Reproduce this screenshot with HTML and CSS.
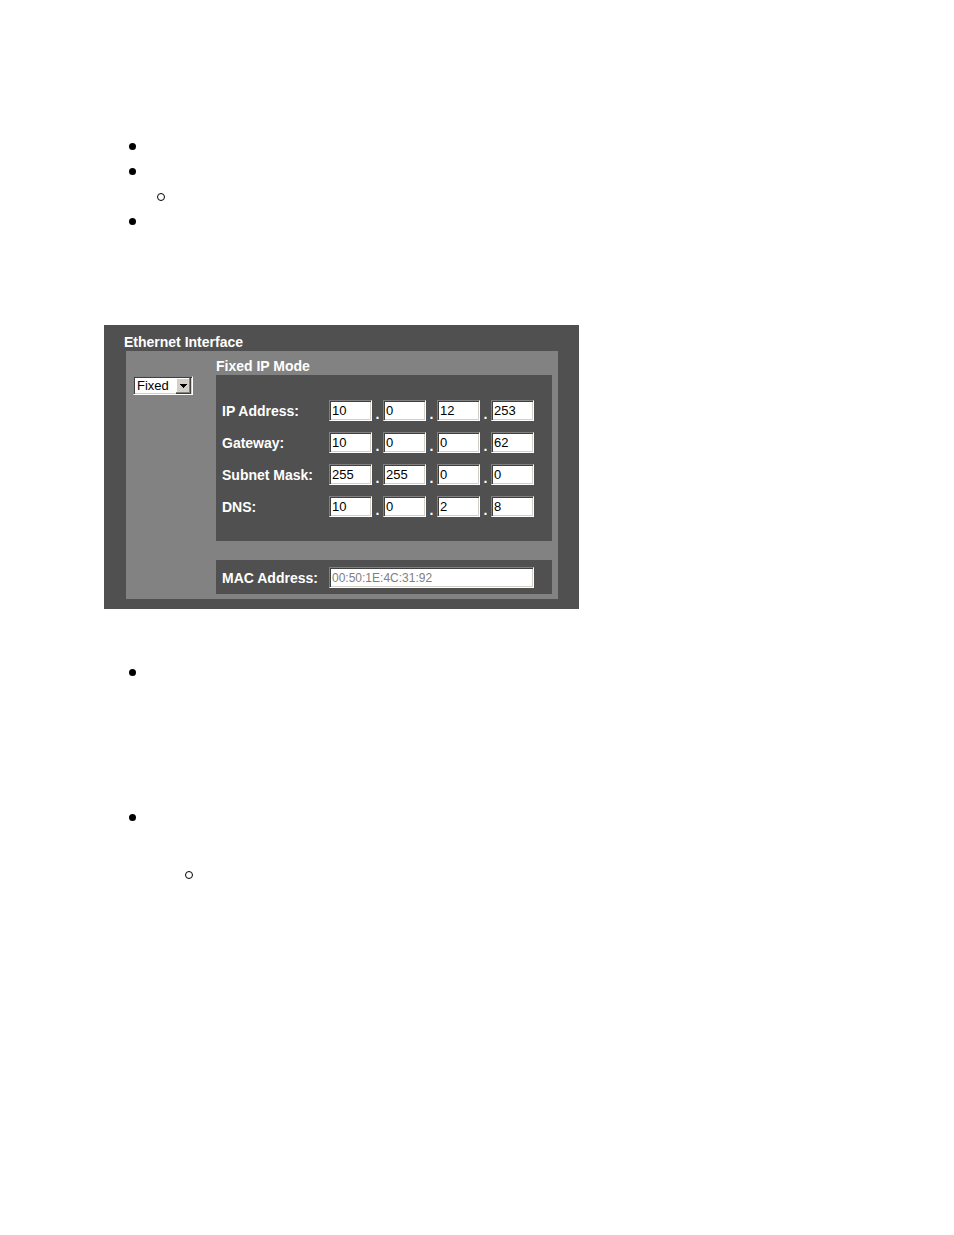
FILE: index.html
```html
<!DOCTYPE html>
<html lang="en">
<head>
  <meta charset="UTF-8">
  <meta name="viewport" content="width=device-width, initial-scale=1.0">
  <title>Ethernet Interface</title>
  <link rel="stylesheet" href="styles.css">
</head>
<body>

<div class="page">
  <ul class="notes">
    <li></li>
    <li>
      <ul class="sub-notes">
        <li></li>
      </ul>
    </li>
    <li></li>
  </ul>

  <form class="panel">
    <h2 class="title">Ethernet Interface</h2>
    <div class="settings">
      <div class="mode">
        <select class="mode-select" aria-label="IP mode">
          <option>Fixed</option>
        </select>
        <svg class="mode-arrow" width="15" height="16" viewBox="0 0 15 16" shape-rendering="crispEdges" aria-hidden="true">
          <rect width="15" height="16" fill="#404040"/>
          <rect width="14" height="15" fill="#808080"/>
          <rect width="13" height="14" fill="#ffffff"/>
          <rect x="1" y="1" width="12" height="13" fill="#d4d0c8"/>
          <path d="M4 6h7v1h-1v1h-1v1h-1v1h-1v-1h-1v-1h-1v-1h-1z" fill="#000000"/>
        </svg>
      </div>

      <div class="details">
        <h3 class="title">Fixed IP Mode</h3>
        <div class="box addresses">
          <div class="row">
            <label for="ip1">IP Address:</label>
            <input type="text" id="ip1" value="10"><span class="dot">.</span>
            <input type="text" aria-label="IP address, part 2" value="0"><span class="dot">.</span>
            <input type="text" aria-label="IP address, part 3" value="12"><span class="dot">.</span>
            <input type="text" aria-label="IP address, part 4" value="253">
          </div>
          <div class="row">
            <label for="gateway1">Gateway:</label>
            <input type="text" id="gateway1" value="10"><span class="dot">.</span>
            <input type="text" aria-label="Gateway, part 2" value="0"><span class="dot">.</span>
            <input type="text" aria-label="Gateway, part 3" value="0"><span class="dot">.</span>
            <input type="text" aria-label="Gateway, part 4" value="62">
          </div>
          <div class="row">
            <label for="mask1">Subnet Mask:</label>
            <input type="text" id="mask1" value="255"><span class="dot">.</span>
            <input type="text" aria-label="Subnet mask, part 2" value="255"><span class="dot">.</span>
            <input type="text" aria-label="Subnet mask, part 3" value="0"><span class="dot">.</span>
            <input type="text" aria-label="Subnet mask, part 4" value="0">
          </div>
          <div class="row">
            <label for="dns1">DNS:</label>
            <input type="text" id="dns1" value="10"><span class="dot">.</span>
            <input type="text" aria-label="DNS, part 2" value="0"><span class="dot">.</span>
            <input type="text" aria-label="DNS, part 3" value="2"><span class="dot">.</span>
            <input type="text" aria-label="DNS, part 4" value="8">
          </div>
        </div>

        <div class="box mac">
          <div class="row">
            <label for="mac">MAC Address:</label>
            <input type="text" id="mac" class="mac-input" value="00:50:1E:4C:31:92" disabled>
          </div>
        </div>
      </div>
    </div>
  </form>

  <ul class="notes notes-spaced">
    <li></li>
    <li>
      <ul class="sub-notes">
        <li></li>
      </ul>
    </li>
  </ul>
</div>

</body>
</html>
```
FILE: styles.css
```css
*,
*::before {
  box-sizing: border-box;
}

body {
  margin: 0;
  background: #fff;
  color: #000;
  font-family: "Liberation Sans", Arial, sans-serif;
  font-size: 14px;
}

.page {
  padding: 134px 104px;
}

/* Bullet lists */
.notes,
.sub-notes {
  list-style: none;
  margin: 0;
}

.notes {
  padding: 0 0 0 25px;
}

.sub-notes {
  padding: 0 0 0 28px;
}

.notes li {
  display: flow-root;
}

.notes li::before {
  content: "";
  display: block;
  width: 7px;
  height: 7px;
  margin: 9px 0;
  border-radius: 50%;
  background: #000;
}

.notes .sub-notes li::before {
  width: 8px;
  height: 8px;
  margin: 9px 0 8px;
  border: 1px solid #000;
  background: none;
}

.notes-spaced > li:first-child {
  min-height: 145px;
}

.notes-spaced .sub-notes {
  margin-top: 41px;
  padding-left: 56px;
}

/* Ethernet panel */
.panel {
  max-width: 475px;
  margin: 91px 0 51px;
  padding: 8px 21px 10px 22px;
  background: #505050;
  color: #fff;
}

.title {
  margin: 0;
  font-size: 14px;
  line-height: 18px;
}

.panel > .title {
  margin-left: -2px;
}

.settings {
  display: flex;
  padding: 6px 6px 5px 7px;
  background: #828282;
}

.mode {
  position: relative;
  width: 60px;
  margin: 19px 23px 0 0;
}

.mode-select {
  display: block;
  width: 100%;
  height: 19px;
  padding: 0 3px;
  appearance: none;
  border: 1px solid;
  border-color: #808080 #fff #fff #808080;
  border-radius: 0;
  box-shadow: inset 1px 1px #404040, inset -1px -1px #d4d0c8;
  background: #fff;
  color: #000;
  font-family: inherit;
  font-size: 13px;
}

.mode-arrow {
  position: absolute;
  top: 2px;
  right: 2px;
  pointer-events: none;
}

.details {
  flex: 1;
}

.box {
  padding: 0 6px;
  background: #505050;
}

.addresses {
  display: grid;
  gap: 11px;
  padding-top: 25px;
  padding-bottom: 24px;
}

.mac {
  margin-top: 19px;
  padding-top: 7px;
  padding-bottom: 6px;
}

.row {
  display: flex;
  align-items: center;
}

label {
  width: 107px;
  font-weight: bold;
  white-space: nowrap;
}

input[type="text"] {
  width: 43px;
  height: 21px;
  padding: 0 2px;
  border: 1px solid;
  border-color: #808080 #fff #fff #808080;
  border-radius: 0;
  box-shadow: inset 1px 1px #404040, inset -1px -1px #d4d0c8;
  background: #fff;
  color: #000;
  font-family: inherit;
  font-size: 13px;
}

input.mac-input {
  width: 205px;
  color: #808080;
  font-size: 12px;
}

.dot {
  align-self: flex-end;
  width: 11px;
  font-weight: bold;
  line-height: 14px;
  text-align: center;
}
```
